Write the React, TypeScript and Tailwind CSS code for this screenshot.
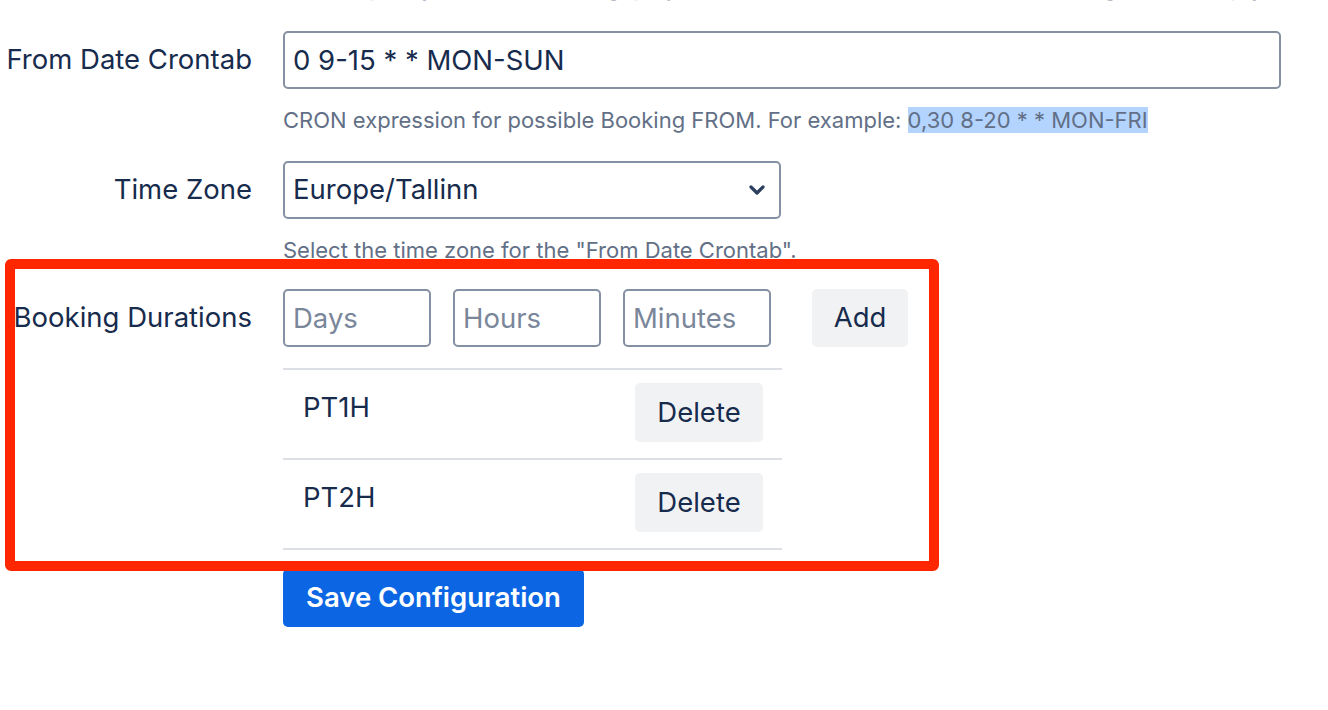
import React, { useState } from 'react'

const font = { fontFamily: 'Inter, "Noto Sans", sans-serif' }

function Label({ children }: { children: React.ReactNode }) {
  return (
    <div className="w-[252px] shrink-0 text-right text-[27.5px] text-[#172b4d] whitespace-nowrap">{children}</div>
  )
}

export default function App() {
  const [durations, setDurations] = useState<string[]>(['PT1H', 'PT2H'])

  return (
    <div className="relative w-[1328px] h-[710px] overflow-hidden bg-white" style={font}>
      {/* help text of the field above, scrolled mostly out of view */}
      <p className="ml-[283px] -mt-[32px] text-[22px] leading-[40px] text-[#a5adba] whitespace-nowrap">
        JQL to specify which issues (e.g. project = ABC) should be available for booking. Leave empty to include all projects.
      </p>

      <div className="mt-[23px] flex items-center gap-[31px]">
        <Label>From Date Crontab</Label>
        <input
          defaultValue="0 9-15 * * MON-SUN"
          className="w-[998px] h-[58px] px-[8px] rounded-[5px] border-2 border-[#8590a2] text-[27.5px] text-[#172b4d] outline-none"
        />
      </div>
      <p className="ml-[283px] mt-[11px] text-[22px] leading-[40px] text-[#626f86] whitespace-nowrap">
        CRON expression for possible Booking FROM. For example:{' '}
        <span className="bg-[#b3d4fe]">0,30 8-20 * * MON-FRI</span>
      </p>

      <div className="mt-[21px] flex items-center gap-[31px]">
        <Label>Time Zone</Label>
        <div className="relative w-[498px] h-[58px] rounded-[5px] border-2 border-[#8590a2] flex items-center pl-[8px] pr-[14px]">
          <span className="flex-1 text-[27.5px] text-[#172b4d]">Europe/Tallinn</span>
          <svg width="16" height="12" viewBox="0 0 16 12" className="text-[#2c3e5d]">
            <path d="M2 3 L8 9 L14 3" fill="none" stroke="currentColor" strokeWidth="3.2" strokeLinecap="round" strokeLinejoin="round" />
          </svg>
        </div>
      </div>
      <p className="ml-[283px] mt-[11px] text-[22px] leading-[40px] text-[#626f86] whitespace-nowrap">
        Select the time zone for the "From Date Crontab".
      </p>

      <div className="mt-[19px] flex items-start gap-[31px]">
        <div className="h-[58px] flex items-center">
          <Label>Booking Durations</Label>
        </div>
        <div className="flex flex-col">
          <div className="flex items-center gap-[22px]">
            {['Days', 'Hours', 'Minutes'].map((p) => (
              <input
                key={p}
                placeholder={p}
                className="w-[148px] h-[58px] px-[8px] rounded-[5px] border-2 border-[#8590a2] text-[27.5px] text-[#172b4d] placeholder:text-[#7a869a] outline-none"
              />
            ))}
            <button className="ml-[19px] w-[96px] h-[58px] rounded-[5px] bg-[#f1f2f4] text-[27.5px] text-[#172b4d]">
              Add
            </button>
          </div>
          <div className="mt-[21px] w-[499px] border-t-2 border-[#dcdfe4]">
            {durations.map((d) => (
              <div key={d} className="h-[90px] flex items-start justify-between border-b-2 border-[#dcdfe4] pl-[20px] pr-[19px]">
                <span className="mt-[17px] text-[27.5px] text-[#172b4d]">{d}</span>
                <button
                  onClick={() => setDurations((prev) => prev.filter((x) => x !== d))}
                  className="mt-[13px] w-[128px] h-[59px] rounded-[5px] bg-[#f1f2f4] text-[27.5px] text-[#172b4d]"
                >
                  Delete
                </button>
              </div>
            ))}
          </div>
          <button className="mt-[19px] w-[301px] h-[58px] rounded-[5px] bg-[#0c66e4] text-white text-[27.5px] font-semibold">
            Save Configuration
          </button>
        </div>
      </div>

      {/* red annotation frame */}
      <div className="absolute left-[5px] top-[259px] w-[934px] h-[312px] border-[10px] border-[#ff2600] rounded-[6px] pointer-events-none" />
    </div>
  )
}
